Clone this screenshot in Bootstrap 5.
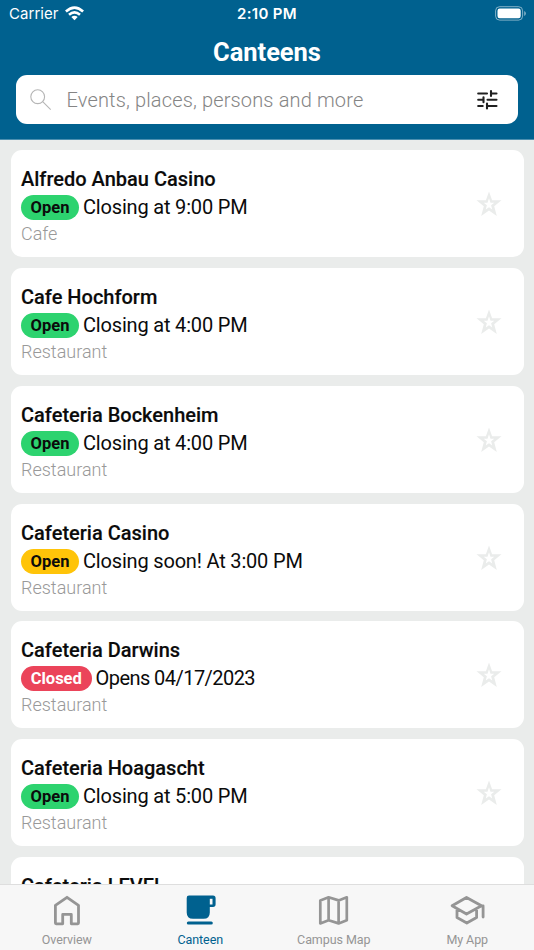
<!DOCTYPE html>
<html lang="en">
<head>
<meta charset="utf-8">
<meta name="viewport" content="width=device-width, initial-scale=1">
<title>Canteens</title>
<link href="https://cdn.jsdelivr.net/npm/bootstrap@5.3.0/dist/css/bootstrap.min.css" rel="stylesheet">
<style>
body{font-family:Roboto,"Liberation Sans",sans-serif;background:#eaeceb;color:#0b0b0b}
svg{display:block;flex:none}
.app-shell{height:950px}
.app-header{background:#00618f;height:140px;border-bottom:1px solid #4b8fb0}
.status-bar{height:27px;padding:0 8px 0 9px;font-family:Inter,sans-serif;font-size:15px;line-height:27px}
.status-bar>div{flex:1 1 0}
.carrier{letter-spacing:.05px}
.wifi{margin-left:6px}
.clock{font-weight:600;font-size:15px;letter-spacing:.35px;margin-right:1px}
.page-title{font-size:25.5px;font-weight:700;line-height:30px;margin:10px 0 8px;letter-spacing:-.05px}
.search-box{height:49px;margin:0 16px;border-radius:11px;padding:0 20px 0 14px}
.search-hint{font-size:20px;line-height:49px;color:#858585;margin-left:14.5px;letter-spacing:.15px;font-weight:300;padding-top:2px}
.canteen-list{padding:10px 10.5px 0;gap:10.85px;min-height:0}
.canteen{height:107px;border-radius:11px;padding:14px 21px 0 10.5px;flex:none}
.canteen-name{font-size:20px;font-weight:500;line-height:30px;-webkit-text-stroke:.15px #0b0b0b}
.hours{height:27px;gap:4px;font-size:20px;line-height:27px;font-weight:400;letter-spacing:-.18px}
.hours-closed{letter-spacing:-.55px}
.pill{height:25px;padding:0 10px;font-size:16.5px;line-height:25px;font-weight:700;letter-spacing:0}
.pill-open{background:#2dd36f;width:58px}
.pill-soon{background:#ffc409;width:58px}
.pill-closed{background:#eb445a;color:#fff;width:70.5px}
.kind{font-size:18px;line-height:26px;color:#999;letter-spacing:0;font-weight:300}
.star{margin-top:26px}
.tabs{height:66px;background:#f7f7f7;border-top:1px solid #dedede;color:#959595}
.tabs a{color:inherit;text-decoration:none;font-size:12.5px;line-height:16px;letter-spacing:-.08px;padding-top:8.5px}
.tabs a.current{color:#00618f}
.tabs svg{margin-bottom:4.5px}
</style>
</head>
<body>
<div class="app-shell d-flex flex-column overflow-hidden">
<header class="app-header text-white flex-shrink-0">
  <div class="status-bar d-flex align-items-center">
    <div class="d-flex align-items-center"><span class="carrier">Carrier</span>
      <svg class="wifi" width="19" height="15" viewBox="0 0 19 15" fill="none" stroke="#fff" stroke-width="2.6"><path d="M.9 5.5Q9.5-2.3 18.1 5.5M4 8.8Q9.5 4 15 8.8"/><path d="M9.5 14.2 6.3 11Q9.5 8.4 12.7 11Z" fill="#fff" stroke="none"/></svg></div>
    <span class="clock">2:10 PM</span>
    <div class="d-flex justify-content-end"><svg width="31" height="15" viewBox="0 0 31 15"><rect x=".6" y=".7" width="27" height="13.4" rx="4" fill="none" stroke="#fff" stroke-opacity=".5"/><rect x="2.5" y="2.6" width="23.2" height="9.6" rx="2.2" fill="#fff"/><path d="M29.2 5v5q1.7-.8 1.7-2.5T29.2 5Z" fill="#fff" fill-opacity=".5"/></svg></div>
  </div>
  <h1 class="page-title text-center">Canteens</h1>
  <div class="search-box bg-white d-flex align-items-center">
    <svg width="22" height="22" viewBox="0 0 22 22" fill="none" stroke="#b5b5b5" stroke-width="1.1"><circle cx="7.7" cy="7.7" r="6.9"/><path d="m12.7 12.7 8 8"/></svg>
    <span class="search-hint flex-grow-1">Events, places, persons and more</span>
    <svg width="22" height="22" viewBox="0 0 22 22" fill="none" stroke="#202020" stroke-width="2.1" stroke-linecap="round"><path d="M2.2 4.5h8.8M15 4.5h5.5M15 2v5M2.2 10.7h5M7.5 8.2v5M11.5 10.7h9M2.2 17h4.5M11 14.5v5M11 17h9.5"/></svg>
  </div>
</header>
<main id="list" class="canteen-list d-flex flex-column flex-grow-1 overflow-hidden"></main>
<nav class="tabs d-flex flex-shrink-0">
  <a href="#" class="col-3 d-flex flex-column align-items-center"><svg width="34" height="34" viewBox="0 0 34 34" fill="none" stroke="currentColor" stroke-width="2.8" stroke-linejoin="round"><path d="M5.4 11.3 17 3.3l11.5 8v17.8q0 .7-.7.7h-6.5v-9.4h-8.6v9.4H6.1q-.7 0-.7-.7Z"/></svg>Overview</a>
  <a href="#" class="current col-3 d-flex flex-column align-items-center"><svg width="34" height="34" viewBox="0 0 34 34" fill="none" stroke="currentColor"><path d="M6 1.6h24q2.6 0 2.6 2.6v6q0 2.7-2.6 2.7h-3.2v5.5q0 6.3-6.3 6.3H10q-6.3 0-6.3-6.3V4q0-2.4 2.3-2.4Z" fill="currentColor" stroke="none"/><path d="M26.8 4.8h2.7v5.7h-2.7Z" fill="#f7f7f7" stroke="none"/><path d="M5.3 29h23" stroke-width="3" stroke-linecap="round"/></svg>Canteen</a>
  <a href="#" class="col-3 d-flex flex-column align-items-center"><svg width="34" height="34" viewBox="0 0 34 34" fill="none" stroke="currentColor" stroke-width="2.7" stroke-linejoin="round"><path d="m3.3 6.4 8.3-3.1 10 3.1 8.2-3.1v23l-8.2 3.1-10-3.1-8.3 3.1ZM11.6 3.3v23M21.6 6.4v23"/></svg>Campus Map</a>
  <a href="#" class="col-3 d-flex flex-column align-items-center"><svg width="36" height="34" viewBox="0 0 36 34" fill="none" stroke="currentColor" stroke-width="2.8" stroke-linejoin="round" stroke-linecap="round"><path d="m3.1 11.8 14.4-8.3 15 8.3-15 8.2ZM8 14.8v8.8L17.8 29l9.8-5.4v-8.8M34.1 12.3v10.8M32.7 11.8h1.4"/></svg>My App</a>
</nav>
</div>
<script>
const canteens = [
  ["Alfredo Anbau Casino", "open", "Open", "Closing at 9:00 PM", "Cafe"],
  ["Cafe Hochform", "open", "Open", "Closing at 4:00 PM", "Restaurant"],
  ["Cafeteria Bockenheim", "open", "Open", "Closing at 4:00 PM", "Restaurant"],
  ["Cafeteria Casino", "soon", "Open", "Closing soon! At 3:00 PM", "Restaurant"],
  ["Cafeteria Darwins", "closed", "Closed", "Opens 04/17/2023", "Restaurant"],
  ["Cafeteria Hoagascht", "open", "Open", "Closing at 5:00 PM", "Restaurant"],
  ["Cafeteria LEVEL"]
];
document.getElementById("list").innerHTML = canteens.map(([name, state, label, hours, kind]) => `
  <article class="canteen bg-white d-flex justify-content-between">
    <div><div class="canteen-name">${name}</div>${state ? `
      <div class="hours hours-${state} d-flex align-items-center"><span class="pill pill-${state} rounded-pill d-flex justify-content-center">${label}</span><span>${hours}</span></div>
      <div class="kind">${kind}</div>` : ""}</div>
    <svg class="star" width="28" height="28" viewBox="0 0 28 28"><path fill="#eaeceb" fill-rule="evenodd" d="m14 1.5 3.1 8.8H26.5l-7.3 6 2.6 9.7L14 20.6 6.2 26l2.6-9.7-7.3-6h9.4ZM14 8.2l-1.5 4.5H8.7l3.2 2.6-1.2 4.3 3.3-2.3 3.3 2.3-1.2-4.3 3.2-2.6h-3.8Z"/></svg>
  </article>`).join("");
</script>
<script src="https://cdn.jsdelivr.net/npm/bootstrap@5.3.0/dist/js/bootstrap.bundle.min.js"></script>
</body>
</html>
